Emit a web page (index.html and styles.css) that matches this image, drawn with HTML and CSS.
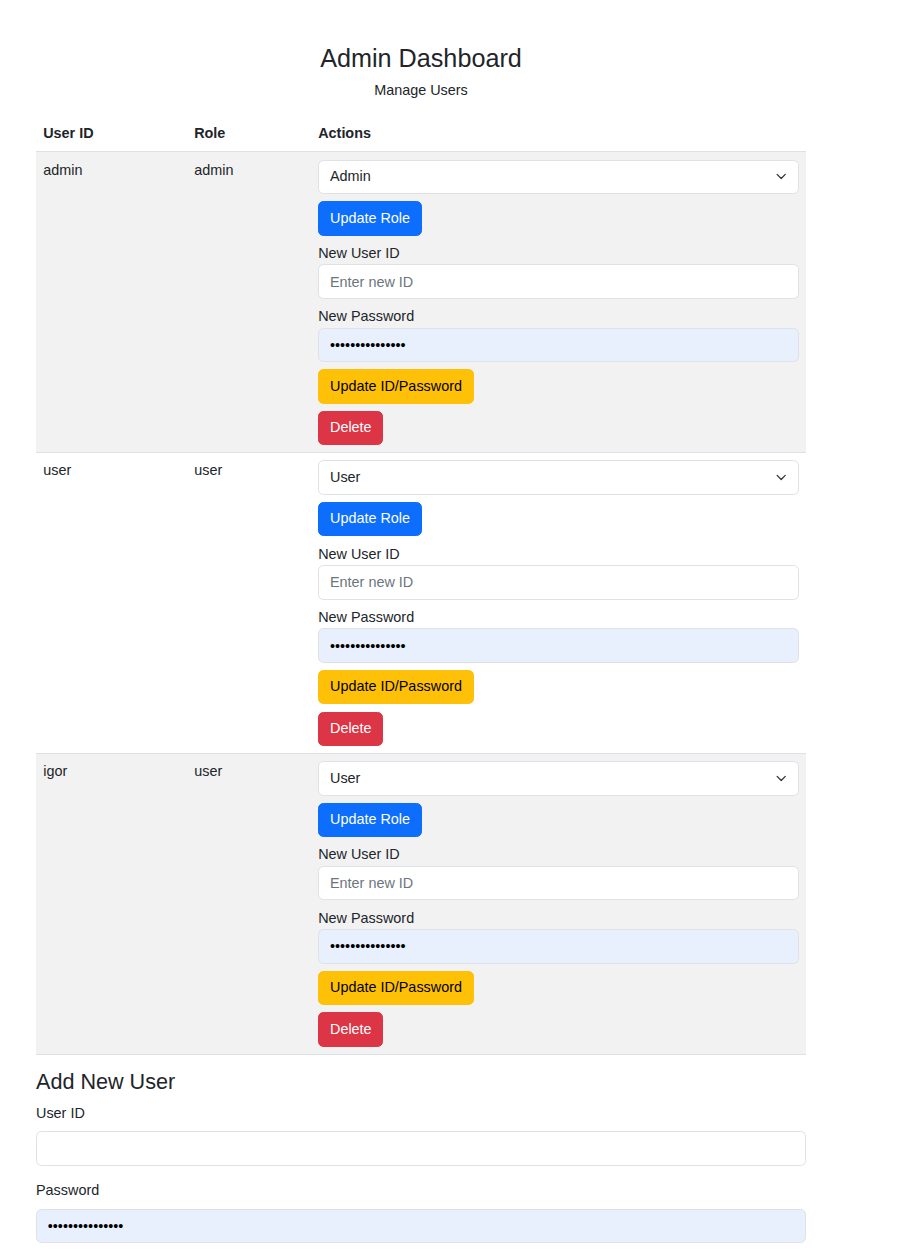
FILE: index.html
```html
<!DOCTYPE html>
<html lang="en">
<head>
<meta charset="utf-8">
<title>Admin Dashboard</title>
<link rel="stylesheet" href="styles.css">
</head>
<body>
<div class="page">
  <h3 class="title">Admin Dashboard</h3>
  <p class="subtitle">Manage Users</p>

  <table class="users">
    <colgroup>
      <col class="c-id">
      <col class="c-role">
      <col class="c-actions">
    </colgroup>
    <thead>
      <tr><th>User ID</th><th>Role</th><th>Actions</th></tr>
    </thead>
    <tbody>
      <tr class="striped">
        <td>admin</td>
        <td>admin</td>
        <td>
          <div class="actions">
            <div class="select-wrap">
              <select class="control select"><option selected>Admin</option><option>User</option></select>
              <svg class="chev" viewBox="0 0 16 16"><path d="m2 5 6 6 6-6" fill="none" stroke="#343a40" stroke-width="2" stroke-linecap="round" stroke-linejoin="round"/></svg>
            </div>
            <button class="btn btn-primary">Update Role</button>
            <label class="lbl">New User ID</label>
            <input class="control gap" type="text" placeholder="Enter new ID">
            <label class="lbl">New Password</label>
            <input class="control autofill gap" type="password" value="abcdefghijklmno">
            <button class="btn btn-warning">Update ID/Password</button>
            <button class="btn btn-danger">Delete</button>
          </div>
        </td>
      </tr>
      <tr>
        <td>user</td>
        <td>user</td>
        <td>
          <div class="actions">
            <div class="select-wrap">
              <select class="control select"><option>Admin</option><option selected>User</option></select>
              <svg class="chev" viewBox="0 0 16 16"><path d="m2 5 6 6 6-6" fill="none" stroke="#343a40" stroke-width="2" stroke-linecap="round" stroke-linejoin="round"/></svg>
            </div>
            <button class="btn btn-primary">Update Role</button>
            <label class="lbl">New User ID</label>
            <input class="control gap" type="text" placeholder="Enter new ID">
            <label class="lbl">New Password</label>
            <input class="control autofill gap" type="password" value="abcdefghijklmno">
            <button class="btn btn-warning">Update ID/Password</button>
            <button class="btn btn-danger">Delete</button>
          </div>
        </td>
      </tr>
      <tr class="striped">
        <td>igor</td>
        <td>user</td>
        <td>
          <div class="actions">
            <div class="select-wrap">
              <select class="control select"><option>Admin</option><option selected>User</option></select>
              <svg class="chev" viewBox="0 0 16 16"><path d="m2 5 6 6 6-6" fill="none" stroke="#343a40" stroke-width="2" stroke-linecap="round" stroke-linejoin="round"/></svg>
            </div>
            <button class="btn btn-primary">Update Role</button>
            <label class="lbl">New User ID</label>
            <input class="control gap" type="text" placeholder="Enter new ID">
            <label class="lbl">New Password</label>
            <input class="control autofill gap" type="password" value="abcdefghijklmno">
            <button class="btn btn-warning">Update ID/Password</button>
            <button class="btn btn-danger">Delete</button>
          </div>
        </td>
      </tr>
    </tbody>
  </table>

  <h4 class="section-title">Add New User</h4>
  <div class="field">
    <label class="form-label">User ID</label>
    <input class="control" type="text">
  </div>
  <div class="field">
    <label class="form-label">Password</label>
    <input class="control autofill" type="password" value="abcdefghijklmno">
  </div>
</div>
</body>
</html>
```

FILE: styles.css
```css
* { box-sizing: border-box; }

html, body {
  margin: 0;
  padding: 0;
  background: #fff;
}

body {
  font-family: "Liberation Sans", Arial, sans-serif;
  font-size: 14.4px;
  line-height: 1.5;
  color: #212529;
}

.page {
  width: 770px;
  margin-left: 36px;
  padding-top: 43.2px;
}

.title {
  margin: 0 0 6.2px;
  font-size: 25.2px;
  font-weight: 500;
  line-height: 1.2;
  text-align: center;
}

.subtitle {
  margin: 0 0 14.2px;
  text-align: center;
}

.users {
  width: 100%;
  border-collapse: collapse;
  table-layout: fixed;
  margin-bottom: 14.4px;
  vertical-align: top;
}

.c-id { width: 151px; }
.c-role { width: 124px; }
.c-actions { width: 495px; }

.users th,
.users td {
  padding: 7.2px;
  border-bottom: 1px solid #dee2e6;
  text-align: left;
  vertical-align: top;
}

.users th { font-weight: 700; }

.users tr.striped td { background: #f2f2f2; }

.actions {
  display: flex;
  flex-direction: column;
  align-items: flex-start;
}

.select-wrap {
  position: relative;
  align-self: stretch;
  margin-bottom: 7.2px;
}

.control {
  display: block;
  width: 100%;
  height: 34.4px;
  padding: 5.4px 10.8px;
  font-family: inherit;
  font-size: 14.4px;
  line-height: 21.6px;
  color: #212529;
  background: #fff;
  border: 1px solid #dee2e6;
  border-radius: 5.4px;
  outline: none;
}

.actions .control { align-self: stretch; }

.control::placeholder { color: #6c757d; opacity: 1; }

.control.gap { margin-bottom: 7.2px; }

.select {
  appearance: none;
  -webkit-appearance: none;
  padding-right: 40.5px;
}

.chev {
  position: absolute;
  right: 10.8px;
  top: 50%;
  width: 14.4px;
  height: 10.8px;
  margin-top: -5.4px;
  pointer-events: none;
}

.autofill {
  background: #e8f0fe;
  color: #000;
}

.btn {
  display: inline-block;
  height: 34.4px;
  padding: 5.4px 10.8px;
  font-family: inherit;
  font-size: 14.4px;
  line-height: 21.6px;
  border: 1px solid transparent;
  border-radius: 5.4px;
  cursor: pointer;
  margin-bottom: 7.2px;
}

.actions .btn:last-child { margin-bottom: 0; }

.btn-primary { background: #0d6efd; border-color: #0d6efd; color: #fff; }
.btn-warning { background: #ffc107; border-color: #ffc107; color: #000; }
.btn-danger { background: #dc3545; border-color: #dc3545; color: #fff; }

.lbl { display: block; }

.section-title {
  margin: 0 0 7.2px;
  font-size: 21.6px;
  font-weight: 500;
  line-height: 1.2;
}

.field { margin-bottom: 14.4px; }

.form-label {
  display: block;
  margin-bottom: 7.2px;
}
```
